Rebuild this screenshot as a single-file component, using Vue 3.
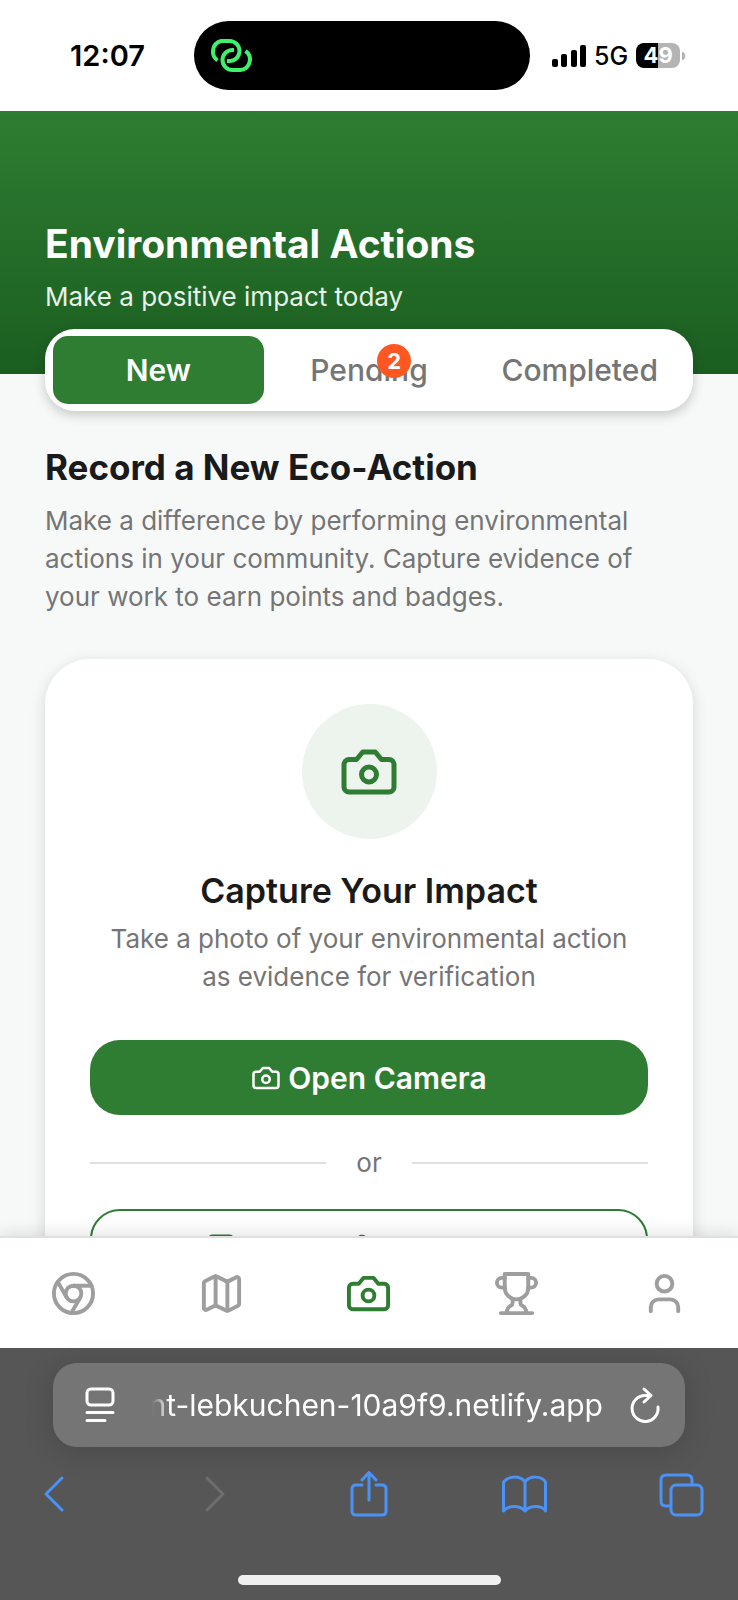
<script setup>
import { ref } from 'vue'

const tabs = [
  { id: 'new', label: 'New' },
  { id: 'pending', label: 'Pending', count: 2 },
  { id: 'completed', label: 'Completed' },
]
const activeTab = ref('new')
const address = ref('nt-lebkuchen-10a9f9.netlify.app')

const cameraBody = 'M14.5 4h-5L7 7H4a2 2 0 0 0-2 2v9a2 2 0 0 0 2 2h16a2 2 0 0 0 2-2V9a2 2 0 0 0-2-2h-3l-2.5-3z'

const navItems = [
  {
    label: 'Home',
    circles: [[12, 12, 10], [12, 12, 4]],
    paths: ['M21.17 8H12', 'M3.95 6.06L8.54 14', 'M10.88 21.94L15.46 14'],
  },
  {
    label: 'Map',
    circles: [],
    paths: [
      'M14.106 5.553a2 2 0 0 0 1.788 0l3.659-1.83A1 1 0 0 1 21 4.619v12.764a1 1 0 0 1-.553.894l-4.553 2.277a2 2 0 0 1-1.788 0l-4.212-2.106a2 2 0 0 0-1.788 0l-3.659 1.83A1 1 0 0 1 3 19.381V6.618a1 1 0 0 1 .553-.894l4.553-2.277a2 2 0 0 1 1.788 0z',
      'M15 5.764v15',
      'M9 3.236v15',
    ],
  },
  { label: 'Actions', active: true, circles: [[12, 13, 3]], paths: [cameraBody] },
  {
    label: 'Leaderboard',
    circles: [],
    paths: [
      'M6 9H4.5a2.5 2.5 0 0 1 0-5H6',
      'M18 9h1.5a2.5 2.5 0 0 0 0-5H18',
      'M4 22h16',
      'M10 14.66V17c0 .55-.47.98-.97 1.21C7.85 18.75 7 20.24 7 22',
      'M14 14.66V17c0 .55.47.98.97 1.21C16.15 18.75 17 20.24 17 22',
      'M18 2H6v7a6 6 0 0 0 12 0V2Z',
    ],
  },
  { label: 'Profile', circles: [[12, 7, 4]], paths: ['M19 21v-2a4 4 0 0 0-4-4H9a4 4 0 0 0-4 4v2'] },
]
</script>

<template>
  <div class="phone">
    <div class="status">
      <time class="clock">12:07</time>
      <div class="island">
        <svg class="hotspot" viewBox="207 36 48 39" aria-hidden="true">
          <path d="M217.500 60.500A11 11 0 0 1 221 41H229.500A10 10 0 0 1 229.500 61H227" />
          <path d="M234 50H232.500A10 10 0 0 0 232.500 70H240.500A10.500 10.500 0 0 0 245.500 51" />
        </svg>
      </div>
      <div class="signals">
        <svg class="bars" viewBox="0 0 34 22" aria-hidden="true">
          <rect x="0" y="14" width="6" height="8" rx="2" />
          <rect x="9" y="9" width="6" height="13" rx="2" />
          <rect x="19" y="5" width="6" height="17" rx="2" />
          <rect x="28" y="0" width="6" height="22" rx="2" />
        </svg>
        <span class="network">5G</span>
        <span class="battery">49</span>
        <span class="nub"></span>
      </div>
    </div>

    <main class="page">
      <header class="hero">
        <h1>Environmental Actions</h1>
        <p>Make a positive impact today</p>
      </header>

      <div class="content">
        <div class="tabs" role="tablist">
          <button
            v-for="tab in tabs"
            :key="tab.id"
            type="button"
            role="tab"
            class="tab"
            :class="{ active: activeTab === tab.id }"
            :aria-selected="activeTab === tab.id"
            @click="activeTab = tab.id"
          >
            {{ tab.label }}
            <span v-if="tab.count" class="badge">{{ tab.count }}</span>
          </button>
        </div>

        <h2>Record a New Eco-Action</h2>
        <p class="intro">
          Make a difference by performing environmental actions in your community. Capture evidence of your work to
          earn points and badges.
        </p>

        <section class="card">
          <div class="medallion">
            <svg class="line-icon" viewBox="0 0 24 24" aria-hidden="true">
              <path :d="cameraBody" />
              <circle cx="12" cy="13" r="3" />
            </svg>
          </div>
          <h3>Capture Your Impact</h3>
          <p class="hint">Take a photo of your environmental action as evidence for verification</p>
          <button type="button" class="action primary">
            <svg class="line-icon" viewBox="0 0 24 24" aria-hidden="true">
              <path :d="cameraBody" />
              <circle cx="12" cy="13" r="3" />
            </svg>
            Open Camera
          </button>
          <div class="divider">or</div>
          <button type="button" class="action outline">
            <svg class="line-icon" viewBox="0 0 24 24" aria-hidden="true">
              <rect x="3" y="3" width="18" height="18" rx="2" />
              <circle cx="9" cy="9" r="2" />
              <path d="m21 15-3.086-3.086a2 2 0 0 0-2.828 0L6 21" />
            </svg>
            Upload from Gallery
          </button>
        </section>
      </div>
    </main>

    <nav class="bottom-nav">
      <a v-for="item in navItems" :key="item.label" href="#" :class="{ active: item.active }" :aria-label="item.label">
        <svg class="line-icon" viewBox="0 0 24 24" aria-hidden="true">
          <circle v-for="(c, i) in item.circles" :key="i" :cx="c[0]" :cy="c[1]" :r="c[2]" />
          <path v-for="d in item.paths" :key="d" :d="d" />
        </svg>
      </a>
    </nav>

    <footer class="browser">
      <div class="address">
        <button type="button" aria-label="Page menu">
          <svg class="page-menu" viewBox="0 0 28 34" aria-hidden="true">
            <rect x="1" y="1" width="26" height="16" rx="4" />
            <path d="M1 24.500H27M1 32.500H19" />
          </svg>
        </button>
        <input v-model="address" type="text" aria-label="Address" />
        <button type="button" aria-label="Reload">
          <svg class="reload" viewBox="0 0 28 34" aria-hidden="true">
            <path d="M27 19A13 13 0 1 1 14 7.500H20M13 1L20 7.500L13 14" />
          </svg>
        </button>
      </div>
      <div class="toolbar">
        <button type="button" aria-label="Back">
          <svg class="tool" viewBox="0 0 46 46"><path d="M31 7L15 23L31 39" /></svg>
        </button>
        <button type="button" aria-label="Forward" disabled>
          <svg class="tool" viewBox="0 0 46 46"><path d="M19 7L35 23L19 39" /></svg>
        </button>
        <button type="button" aria-label="Share">
          <svg class="tool" viewBox="0 0 46 46">
            <path d="M17 14H11Q7 14 7 18V40Q7 44 11 44H37Q41 44 41 40V18Q41 14 37 14H31M24 29V1.500M17 9L24 1.500L31 9" />
          </svg>
        </button>
        <button type="button" aria-label="Bookmarks">
          <svg class="tool" viewBox="0 0 46 46">
            <path d="M24 11C19 4 7 5 2.500 11V40C7 34 19 34 24 40C29 34 41 34 44.500 40V11C41 5 29 4 24 11V40" />
          </svg>
        </button>
        <button type="button" aria-label="Tabs">
          <svg class="tool" viewBox="0 0 46 46">
            <path d="M12 35H8Q3 35 3 30V9Q3 4 8 4H29Q34 4 34 9V13" />
            <rect x="13" y="14" width="31" height="30" rx="5" />
          </svg>
        </button>
      </div>
      <div class="home-indicator"></div>
    </footer>
  </div>
</template>

<style>
body {
  background: #f7f9f9;
}
</style>

<style scoped>
.phone {
  display: flex;
  flex-direction: column;
  height: 100vh;
  font-family: Inter, "Liberation Sans", sans-serif;
  font-optical-sizing: none;
  color: #1a1a1a;
}
.phone *,
.phone {
  box-sizing: border-box;
}
h1,
h2,
h3,
p {
  margin: 0;
}
button,
input {
  font: inherit;
  color: inherit;
  background: none;
  border: 0;
  padding: 0;
}
svg {
  display: block;
  fill: none;
}
.line-icon {
  stroke: currentColor;
  stroke-width: 2;
  stroke-linecap: round;
  stroke-linejoin: round;
}

.status {
  display: grid;
  grid-template-columns: 1fr 336px 1fr;
  align-items: center;
  padding: 21px 14px;
  background: #fff;
  color: #000;
}
.clock {
  justify-self: center;
  font-size: 29px;
  font-weight: 600;
}
.island {
  display: flex;
  align-items: center;
  height: 69px;
  margin-right: 7px;
  margin-left: -7px;
  padding-left: 13px;
  border-radius: 35px;
  background: #000;
}
.hotspot {
  width: 48px;
  height: 39px;
  stroke: #3df26b;
  stroke-width: 4;
}
.signals {
  display: flex;
  align-items: center;
  padding-left: 15px;
}
.bars {
  width: 34px;
  height: 22px;
  fill: #000;
}
.network {
  margin: 0 8px;
  font-size: 25px;
  font-weight: 500;
}
.battery {
  width: 44px;
  border-radius: 8px;
  background: linear-gradient(90deg, #000 50%, #b4b4b4 50%);
  color: #fff;
  font-size: 22px;
  font-weight: 700;
  line-height: 25px;
  text-align: center;
}
.nub {
  width: 3px;
  height: 8px;
  margin-left: 2px;
  border-radius: 0 4px 4px 0;
  background: #b4b4b4;
}

.page {
  flex: 1 1 0;
  min-height: 0;
  overflow: hidden;
  background: #f7f9f9;
}
.hero {
  padding: 105px 45px 58px;
  background: linear-gradient(#2e7d32, #1b5e20);
  color: #fff;
}
.hero h1 {
  font-size: 39px;
  font-weight: 700;
  line-height: 56px;
}
.hero p {
  margin-top: 6px;
  font-size: 26px;
  line-height: 38px;
  color: #e8f1e8;
}
.content {
  padding: 0 45px;
}
.tabs {
  position: relative;
  display: grid;
  grid-template-columns: repeat(3, 1fr);
  margin-top: -45px;
  padding: 7px 8px;
  border-radius: 30px;
  background: #fff;
  box-shadow: 0 4px 12px rgba(0, 0, 0, 0.2);
}
.tab {
  position: relative;
  height: 68px;
  border-radius: 15px;
  font-size: 30px;
  font-weight: 500;
  color: #757575;
}
.tab.active {
  background: #2e7d32;
  color: #fff;
  font-weight: 600;
}
.badge {
  position: absolute;
  top: 8px;
  right: 30%;
  width: 34px;
  border-radius: 17px;
  background: #ff5722;
  color: #fff;
  font-size: 22px;
  font-weight: 700;
  line-height: 34px;
}
h2 {
  margin-top: 31px;
  font-size: 35px;
  font-weight: 700;
  line-height: 50px;
}
.intro,
.hint {
  font-size: 26px;
  line-height: 38px;
  color: #757575;
}
.intro {
  margin-top: 10px;
}
.card {
  display: flex;
  flex-direction: column;
  margin-top: 43px;
  padding: 45px;
  border-radius: 45px;
  background: #fff;
  box-shadow: 0 4px 15px rgba(0, 0, 0, 0.14);
}
.medallion {
  display: grid;
  place-items: center;
  align-self: center;
  width: 135px;
  height: 135px;
  border-radius: 50%;
  background: #edf4ee;
  color: #2e7d32;
}
.medallion svg {
  width: 60px;
  height: 60px;
}
h3 {
  margin-top: 30px;
  font-size: 34px;
  font-weight: 600;
  line-height: 44px;
  text-align: center;
}
.hint {
  margin-top: 7px;
  padding: 0 15px;
  text-align: center;
}
.action {
  display: flex;
  align-items: center;
  justify-content: center;
  gap: 7px;
  height: 75px;
  border-radius: 30px;
  font-size: 30px;
  font-weight: 600;
}
.action svg {
  width: 30px;
  height: 30px;
}
.primary {
  margin-top: 44px;
  background: #2e7d32;
  color: #fff;
}
.outline {
  border: 2px solid #2e7d32;
  color: #2e7d32;
}
.divider {
  display: flex;
  align-items: center;
  gap: 30px;
  margin: 29px 0 27px;
  font-size: 26px;
  line-height: 38px;
  color: #757575;
}
.divider::before,
.divider::after {
  content: "";
  flex: 1;
  height: 2px;
  background: #e0e0e0;
}

.bottom-nav {
  position: relative;
  display: grid;
  grid-template-columns: repeat(5, 1fr);
  height: 112px;
  border-top: 2px solid #e0e0e0;
  background: #fff;
  box-shadow: 0 -4px 15px rgba(0, 0, 0, 0.1);
}
.bottom-nav a {
  display: grid;
  place-items: center;
  color: #9e9e9e;
}
.bottom-nav a.active {
  color: #2e7d32;
}
.bottom-nav svg {
  width: 47px;
  height: 47px;
}

.browser {
  position: relative;
  padding: 15px 0;
  background: #565656;
  color: #fff;
}
.address {
  display: flex;
  align-items: center;
  height: 84px;
  margin: 0 53px;
  padding: 0 26px 0 33px;
  border-radius: 24px;
  background: #757575;
  box-shadow: 0 4px 30px rgba(0, 0, 0, 0.16);
}
.address svg {
  width: 28px;
  height: 34px;
  overflow: visible;
  stroke: #fff;
  stroke-width: 3;
  stroke-linecap: round;
  stroke-linejoin: round;
}
.address input {
  flex: 1;
  min-width: 0;
  margin: 0 28px 0 24px;
  font-size: 30px;
  text-align: right;
  mask-image: linear-gradient(90deg, transparent 14px, #000 32px);
}
.toolbar {
  display: flex;
  align-items: center;
  justify-content: space-between;
  margin-top: 24px;
  padding: 0 34px 0 31px;
  color: #4a92f5;
}
.toolbar button:disabled {
  color: #6e6e6e;
}
.toolbar svg {
  stroke: currentColor;
  stroke-width: 3;
  stroke-linecap: round;
  stroke-linejoin: round;
}
.tool {
  width: 46px;
  height: 46px;
}
.home-indicator {
  width: 263px;
  height: 10px;
  margin: 58px auto 0;
  border-radius: 5px;
  background: #f0f0f0;
}
</style>
